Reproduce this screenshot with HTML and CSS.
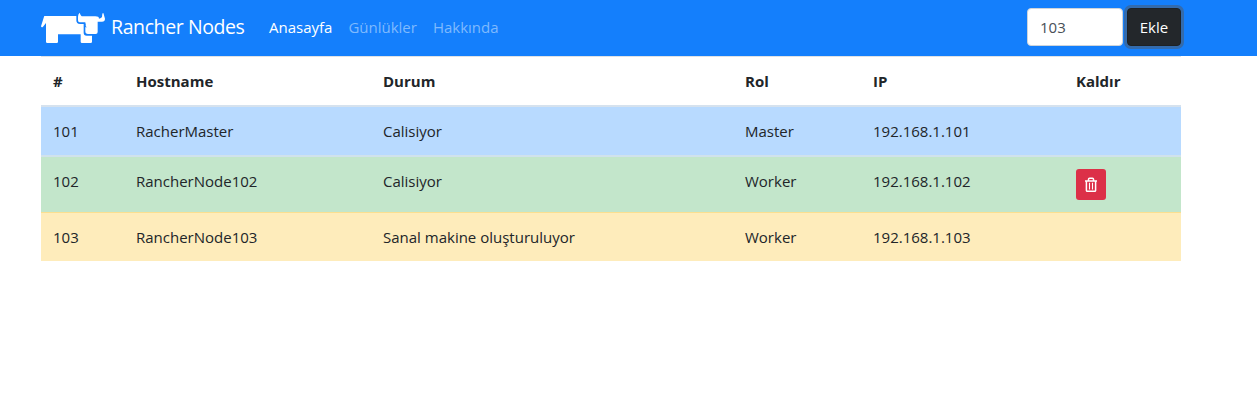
FILE: index.html
```html
<!DOCTYPE html>
<html lang="tr">
<head>
<meta charset="utf-8">
<title>Rancher Nodes</title>
<link rel="stylesheet" href="styles.css">
</head>
<body>
<nav class="navbar">
  <div class="container navbar-inner">
    <a class="brand" href="#">
      <svg class="logo" viewBox="33 36 192 96" aria-hidden="true">
        <path d="M43 48H139V61Q139 72 150 72H161V98Q161 107 170 107H186V125Q186 129 182 129H156Q152 129 152 125V103H84V125Q84 129 80 129H52Q48 129 48 125V69L39 80Q35 84 33 79L42 50Z"/>
        <path d="M149 38Q152 49 158 49H196Q207 49 207 56Q214 55 216 51L217 41Q220 37 221 42L225 56Q225 65 216 65H203V96Q203 102 197 102H174Q166 102 166 94V67H149Q144 67 144 61V50Q144 43 149 38Z"/>
        <path class="logo-line" d="M168 82Q165 78 165 70"/>
      </svg>
      <span class="brand-name">Rancher Nodes</span>
    </a>
    <ul class="nav">
      <li><a class="nav-link active" href="#">Anasayfa</a></li>
      <li><a class="nav-link" href="#">Günlükler</a></li>
      <li><a class="nav-link" href="#">Hakkında</a></li>
    </ul>
    <form class="add-form">
      <input class="input" type="text" value="103" aria-label="ID">
      <button class="btn btn-dark" type="button">Ekle</button>
    </form>
  </div>
</nav>
<main class="container">
  <table class="table">
    <colgroup><col class="c-id"><col class="c-host"><col class="c-state"><col class="c-role"><col class="c-ip"><col class="c-remove"></colgroup>
    <thead>
      <tr><th>#</th><th>Hostname</th><th>Durum</th><th>Rol</th><th>IP</th><th>Kaldır</th></tr>
    </thead>
    <tbody>
      <tr class="primary"><td>101</td><td>RacherMaster</td><td>Calisiyor</td><td>Master</td><td>192.168.1.101</td><td></td></tr>
      <tr class="success"><td>102</td><td>RancherNode102</td><td>Calisiyor</td><td>Worker</td><td>192.168.1.102</td><td>
        <button class="btn-danger" type="button" aria-label="Kaldır">
          <svg class="trash" viewBox="0 0 14 16" aria-hidden="true">
            <path d="M1 4H13M4.5 3.5V2.2Q4.5 1.2 5.5 1.2H8.5Q9.5 1.2 9.5 2.2V3.5M2.4 4V13.4Q2.4 14.3 3.3 14.3H10.7Q11.6 14.3 11.6 13.4V4"/>
            <path class="thin" d="M5.5 5.8V12.4M8.5 5.8V12.4"/>
          </svg>
        </button></td></tr>
      <tr class="warning"><td>103</td><td>RancherNode103</td><td>Sanal makine oluşturuluyor</td><td>Worker</td><td>192.168.1.103</td><td></td></tr>
    </tbody>
  </table>
</main>
</body>
</html>
```
FILE: styles.css
```css
* { box-sizing: border-box; }
body {
  margin: 0;
  background: #fff;
  color: #212529;
  font: 15px/24px "Open Sans", "Noto Sans", sans-serif;
}
a { color: inherit; text-decoration: none; }
.container { width: 1140px; margin-left: 41px; }
.navbar { height: 56px; background: #147ffc; color: #fff; }
.navbar-inner { display: flex; align-items: center; height: 56px; }
.brand { display: flex; align-items: center; gap: 6px; width: 228px; }
.logo { width: 64px; height: 32px; fill: #fff; flex: none; }
.logo-line { fill: none; stroke: #147ffc; stroke-width: 3; }
.brand-name { font-size: 19.5px; letter-spacing: -.4px; line-height: 30px; margin-top: -3px; white-space: nowrap; }
.nav { display: flex; gap: 16px; margin: -2px 0 0; padding: 0; list-style: none; }
.nav-link { color: #7fbafe; }
.nav-link.active { color: #fff; }
.add-form { display: flex; gap: 4px; margin-left: auto; margin-top: -2px; }
.input {
  width: 96px;
  height: 38px;
  padding: 6px 12px;
  border: 1px solid #ced4da;
  border-radius: 4px;
  background: #fff;
  color: #495057;
  font: inherit;
}
.btn {
  width: 54px;
  height: 38px;
  padding: 0;
  border: 1px solid #1d2124;
  border-radius: 4px;
  font: inherit;
}
.btn-dark { background: #23272b; color: #fff; box-shadow: 0 0 0 3px rgba(82, 88, 93, .5); }
.table { width: 1140px; table-layout: fixed; border-collapse: separate; border-spacing: 0; }
.c-id { width: 83px; }
.c-host { width: 247px; }
.c-state { width: 362px; }
.c-role { width: 128px; }
.c-ip { width: 203px; }
.c-remove { width: 117px; }
th, td { padding: 12px; text-align: left; vertical-align: top; }
th { height: 51px; border-top: 1px solid #dee2e6; border-bottom: 2px solid #d6e2ee; font-weight: 700; }
.primary td { height: 50px; background: #b8daff; border-bottom: 2px solid #d0e2ec; }
.success td { height: 55px; background: #c3e6cb; }
.warning td { height: 49px; background: #feecbb; border-top: 1px solid #fbdf90; }
.btn-danger {
  display: flex;
  align-items: center;
  justify-content: center;
  width: 30px;
  height: 31px;
  padding: 0;
  border: 0;
  border-radius: 3px;
  background: #dc3048;
}
.trash { width: 14px; height: 16px; fill: none; stroke: #fff; stroke-width: 1.5; }
.thin { stroke-width: 1.1; }
```
